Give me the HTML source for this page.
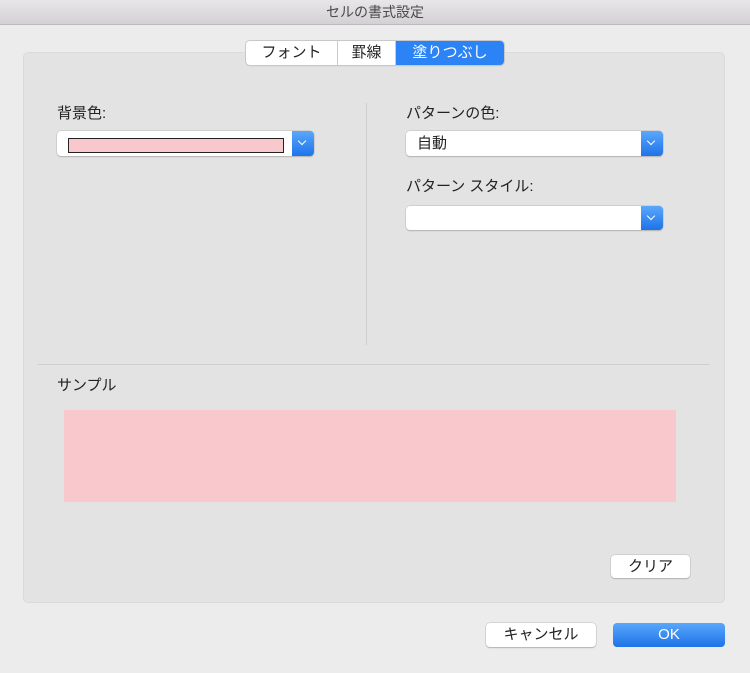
<!DOCTYPE html>
<html><head><meta charset="utf-8"><style>
*{box-sizing:border-box;margin:0;padding:0}
body{width:750px;height:673px;background:#ececec;font-family:"Liberation Sans","Noto Sans CJK JP",sans-serif;font-size:14px;color:#222;position:relative;overflow:hidden}
.a{position:absolute}
.title{left:0;top:0;width:750px;height:25px;background:linear-gradient(#e8e6e8,#d3d1d3);border-bottom:1px solid #b9b9b9;text-align:center;line-height:25px;font-size:14px;color:#4a4a4a}
.panel{left:23px;top:52px;width:702px;height:551px;background:#e3e3e3;border-radius:5px;border:1px solid #dadada}
.tabs{left:246px;top:41px;height:24px;display:flex;border-radius:4px;overflow:hidden;box-shadow:0 0 0 1px #c8c8c8,0 1px 1px #bbb}
.tabs div{background:#fff;line-height:24px;text-align:center;font-size:15px;border-right:1px solid #ccc}
.pop{height:25px;background:#fff;border-radius:4px;box-shadow:0 0 0 .5px #bbb,0 1px 1px #aaa}
.arr{position:absolute;right:0;top:0;width:22px;height:25px;background:linear-gradient(#5aa7fb,#1d73e9);border-radius:0 4px 4px 0}
.arr:after{content:"";position:absolute;left:7px;top:7px;width:5px;height:5px;border-right:1.6px solid #fff;border-bottom:1.6px solid #fff;transform:rotate(45deg)}
.btn{background:#fff;border-radius:4px;box-shadow:0 0 0 .5px #bbb,0 1px 1px #aaa;text-align:center;font-size:15px}
</style></head><body>
<div class="a title">セルの書式設定</div>
<div class="a panel"></div>
<div class="a tabs"><div style="width:92px">フォント</div><div style="width:58px">罫線</div><div style="width:108px;background:#2b83f6;color:#fff;border:none">塗りつぶし</div></div>
<div class="a" style="left:57px;top:102px;font-size:15px">背景色:</div>
<div class="a pop" style="left:57px;top:131px;width:257px"><div class="a" style="left:11px;top:7px;width:216px;height:15px;background:#f9c8cd;border:1.5px solid #222"></div><div class="arr"></div></div>
<div class="a" style="left:366px;top:103px;width:1px;height:242px;background:#cfcfcf"></div>
<div class="a" style="left:406px;top:102px;font-size:15px">パターンの色:</div>
<div class="a pop" style="left:406px;top:131px;width:257px;line-height:25px;padding-left:11px;font-size:15px">自動<div class="arr"></div></div>
<div class="a" style="left:406px;top:175px;font-size:15px">パターン スタイル:</div>
<div class="a pop" style="left:406px;top:206px;width:257px;height:24px"><div class="arr" style="height:24px"></div></div>
<div class="a" style="left:38px;top:364px;width:672px;height:1px;background:#cfcfcf"></div>
<div class="a" style="left:57px;top:374px;font-size:15px">サンプル</div>
<div class="a" style="left:64px;top:410px;width:612px;height:92px;background:#f9c8cd"></div>
<div class="a btn" style="left:611px;top:555px;width:79px;height:23px;line-height:23px">クリア</div>
<div class="a btn" style="left:486px;top:623px;width:110px;height:24px;line-height:24px">キャンセル</div>
<div class="a btn" style="left:613px;top:623px;width:112px;height:24px;line-height:24px;background:linear-gradient(#5aa7fb,#1d73e9);color:#fff;box-shadow:none">OK</div>
</body></html>
